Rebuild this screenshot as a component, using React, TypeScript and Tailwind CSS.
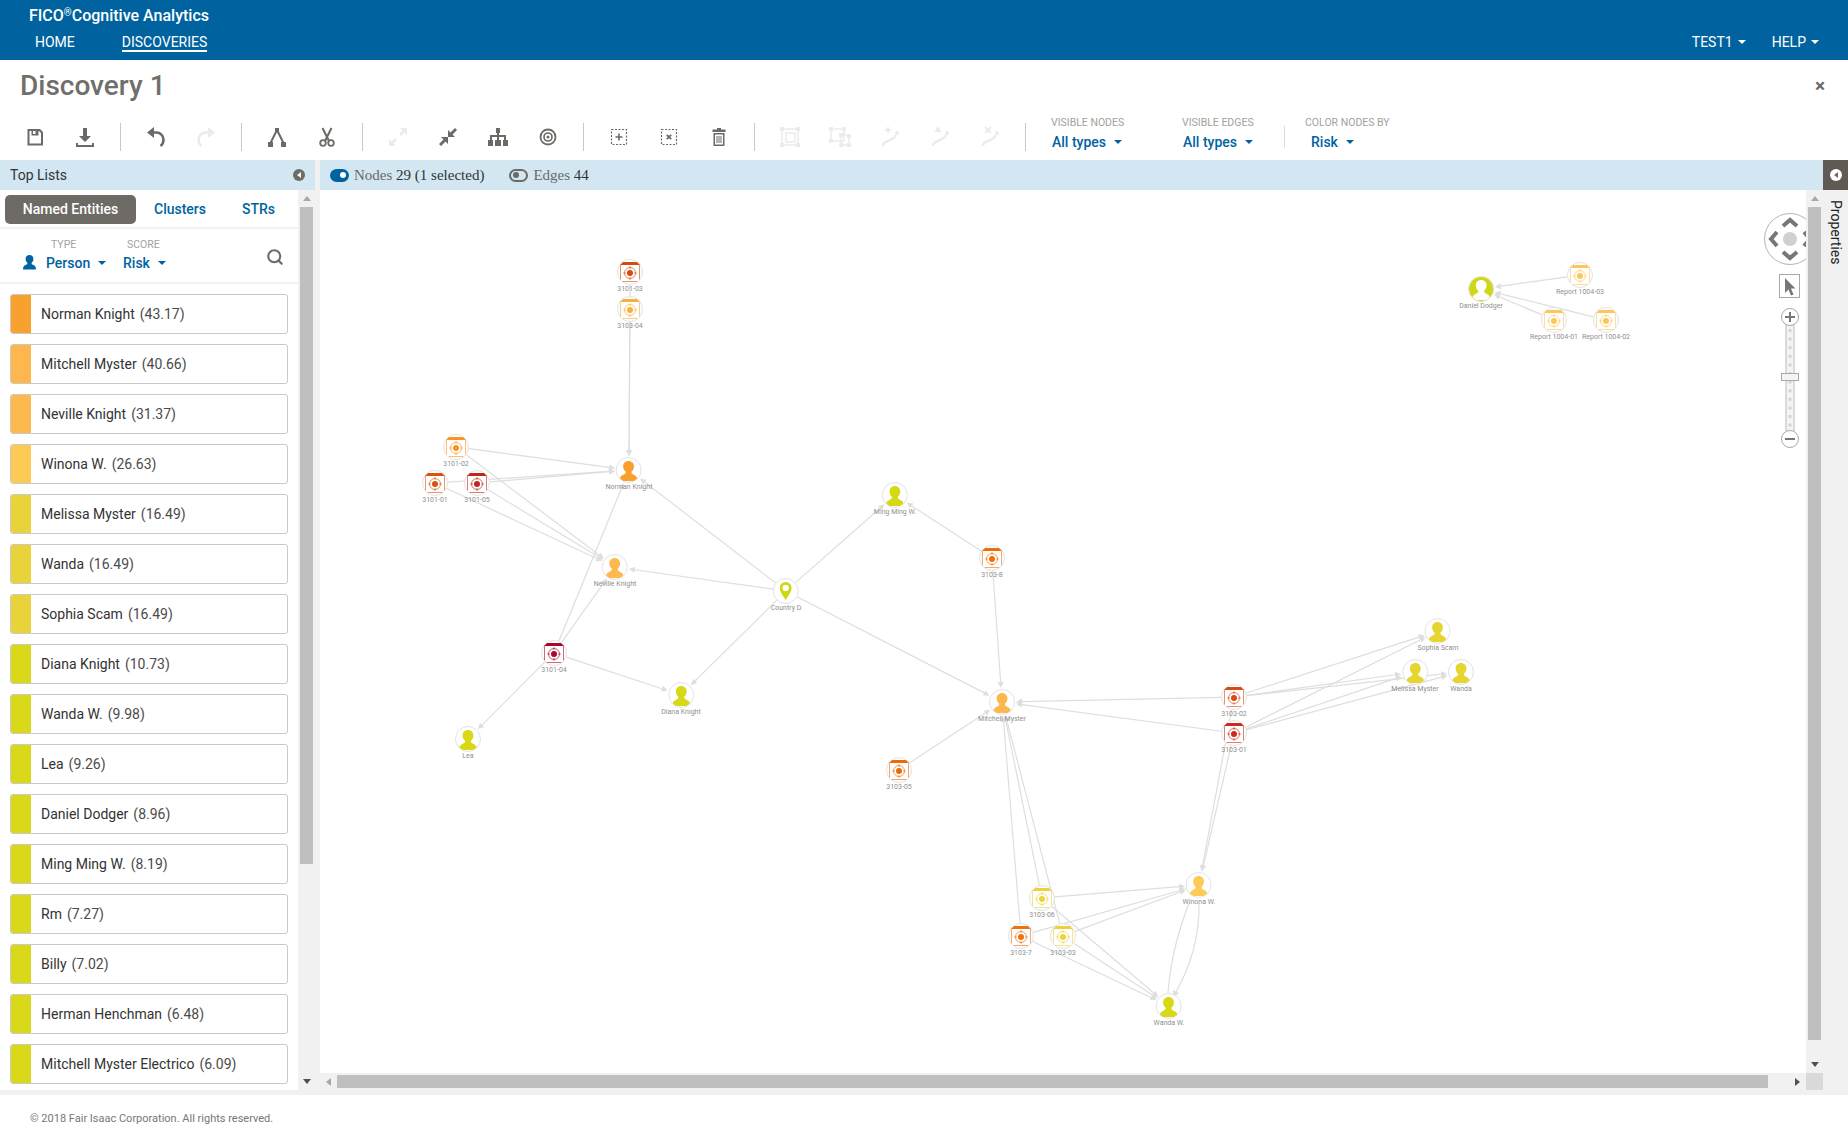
import { Search } from "lucide-react";
import type { ReactNode } from "react";

const OX = 320;
const OY = 190;

type Kind = "person" | "report" | "place";

const nodes: Record<string, { x: number; y: number; label: string; color: string; kind: Kind; filled?: boolean }> = {
  r103: { x: 630, y: 272, label: "3101-03", color: "#d14d0e", kind: "report" },
  r304: { x: 630, y: 309, label: "3103-04", color: "#fbae3c", kind: "report" },
  r102: { x: 456, y: 447, label: "3101-02", color: "#f7931e", kind: "report" },
  r101: { x: 435, y: 483, label: "3101-01", color: "#d9530f", kind: "report" },
  r105: { x: 477, y: 483, label: "3101-05", color: "#c0281c", kind: "report" },
  norman: { x: 629, y: 470, label: "Norman Knight", color: "#fb9f2c", kind: "person" },
  nevile: { x: 615, y: 567, label: "Neville Knight", color: "#fdb94e", kind: "person" },
  ming: { x: 895, y: 495, label: "Ming Ming W.", color: "#d6d916", kind: "person" },
  r38: { x: 992, y: 558, label: "3103-8", color: "#ee6f0a", kind: "report" },
  country: { x: 786, y: 591, label: "Country D", color: "#cdd70f", kind: "place" },
  r104: { x: 554, y: 653, label: "3101-04", color: "#a8092a", kind: "report" },
  diana: { x: 681, y: 695, label: "Diana Knight", color: "#d8d816", kind: "person" },
  lea: { x: 468, y: 739, label: "Lea", color: "#d8d816", kind: "person" },
  mitchell: { x: 1002, y: 702, label: "Mitchell Myster", color: "#fdb74f", kind: "person" },
  r305: { x: 899, y: 770, label: "3103-05", color: "#ea6b07", kind: "report" },
  r302: { x: 1234, y: 697, label: "3103-02", color: "#d94a1a", kind: "report" },
  r301: { x: 1234, y: 733, label: "3103-01", color: "#cc2a1e", kind: "report" },
  sophia: { x: 1438, y: 631, label: "Sophia Scam", color: "#e6d530", kind: "person" },
  melissa: { x: 1415, y: 672, label: "Melissa Myster", color: "#e6d530", kind: "person" },
  wanda: { x: 1461, y: 672, label: "Wanda", color: "#e6d530", kind: "person" },
  winona: { x: 1199, y: 885, label: "Winona W.", color: "#fdcb55", kind: "person" },
  wandaw: { x: 1169, y: 1006, label: "Wanda W.", color: "#d8d816", kind: "person" },
  r306: { x: 1042, y: 898, label: "3103-06", color: "#ecd33a", kind: "report" },
  r37: { x: 1021, y: 936, label: "3103-7", color: "#ed7210", kind: "report" },
  r303: { x: 1063, y: 936, label: "3103-03", color: "#ecd33a", kind: "report" },
  daniel: { x: 1481, y: 289, label: "Daniel Dodger", color: "#cfd818", kind: "person", filled: true },
  rep3: { x: 1580, y: 275, label: "Report 1004-03", color: "#fdc65a", kind: "report" },
  rep1: { x: 1554, y: 320, label: "Report 1004-01", color: "#fdc65a", kind: "report" },
  rep2: { x: 1606, y: 320, label: "Report 1004-02", color: "#fdc65a", kind: "report" },
};

const edges: [string, string][] = [
  ["rep3", "daniel"], ["rep1", "daniel"], ["rep2", "daniel"],
  ["r103", "norman"], ["r304", "norman"],
  ["r102", "norman"], ["r101", "norman"], ["r105", "norman"],
  ["r102", "nevile"], ["r101", "nevile"], ["r105", "nevile"],
  ["r104", "norman"], ["r104", "nevile"], ["r104", "diana"], ["r104", "lea"],
  ["country", "norman"], ["country", "nevile"], ["country", "ming"], ["country", "diana"], ["country", "mitchell"],
  ["r38", "ming"], ["r38", "mitchell"], ["r305", "mitchell"],
  ["r302", "mitchell"], ["r301", "mitchell"],
  ["r302", "sophia"], ["r302", "melissa"], ["r302", "wanda"],
  ["r301", "sophia"], ["r301", "melissa"], ["r301", "wanda"],
  ["r301", "winona"], ["r302", "winona"],
  ["r306", "mitchell"], ["r37", "mitchell"], ["r303", "mitchell"],
  ["r306", "winona"], ["r37", "winona"], ["r303", "winona"],
  ["r306", "wandaw"], ["r37", "wandaw"], ["r303", "wandaw"],
];

const topList = [
  ["Norman Knight", "43.17", "#f9a12e"],
  ["Mitchell Myster", "40.66", "#fdb74e"],
  ["Neville Knight", "31.37", "#fdb94f"],
  ["Winona W.", "26.63", "#fdcb55"],
  ["Melissa Myster", "16.49", "#e9d33a"],
  ["Wanda", "16.49", "#e9d33a"],
  ["Sophia Scam", "16.49", "#e9d33a"],
  ["Diana Knight", "10.73", "#d9d91a"],
  ["Wanda W.", "9.98", "#d9d91a"],
  ["Lea", "9.26", "#d9d91a"],
  ["Daniel Dodger", "8.96", "#d9d91a"],
  ["Ming Ming W.", "8.19", "#d9d91a"],
  ["Rm", "7.27", "#d9d91a"],
  ["Billy", "7.02", "#d9d91a"],
  ["Herman Henchman", "6.48", "#d9d91a"],
  ["Mitchell Myster Electrico", "6.09", "#d9d91a"],
];

function Caret() {
  return <span className="inline-block w-0 h-0 border-x-[4px] border-t-[4px] border-x-transparent border-t-current" />;
}

function Tool({ children }: { children: ReactNode }) {
  return <div className="w-[50px] flex items-center justify-center shrink-0">{children}</div>;
}

function Sep() {
  return <div className="w-px h-[28px] mx-[10px] bg-[#c8c8c8] shrink-0" />;
}

function Ico({ off, children }: { off?: boolean; children: ReactNode }) {
  return (
    <svg viewBox="0 0 24 24" className={off ? "w-[24px] h-[24px] text-[#ebebeb]" : "w-[24px] h-[24px] text-[#6b6a66]"}>
      {children}
    </svg>
  );
}

function Dropdown({ label, value, className }: { label: string; value: string; className: string }) {
  return (
    <div className={"flex flex-col self-start mt-[3px] shrink-0 " + className}>
      <span className="text-[10.5px] leading-[14px] text-[#a3a19d] whitespace-nowrap">{label}</span>
      <span className="text-[14px] leading-[20px] mt-[2px] font-medium text-[#00639f] flex items-center gap-[8px] pl-px">
        {value} <Caret />
      </span>
    </div>
  );
}

function Toolbar() {
  return (
    <div className="h-[50px] flex items-center pl-[10px] pt-[3px]">
      <Tool>
        <Ico>
          <path fill="currentColor" fillRule="evenodd" d="M4.500 4h12.500l3 3v13.500H4.500zM6.500 6v12.500h11.500V8l-2-2h-.5v4.500h-7V6zm3.500 0v3h2.500V6z" />
        </Ico>
      </Tool>
      <Tool>
        <Ico>
          <path fill="currentColor" d="M10 3h4v8h4l-6 6-6-6h4zM3 18h2v2h14v-2h2v4H3z" />
        </Ico>
      </Tool>
      <Sep />
      <Tool>
        <Ico>
          <path fill="none" stroke="currentColor" strokeWidth="2.600" d="M7 7.500h5.500a7 7 0 0 1 7 7c0 3-1 5-3 6.500" />
          <path fill="currentColor" d="M10 2v11L3 7.500z" />
        </Ico>
      </Tool>
      <Tool>
        <Ico off>
          <path fill="none" stroke="currentColor" strokeWidth="2.600" d="M17 7.500h-5.500a7 7 0 0 0-7 7c0 3 1 5 3 6.500" />
          <path fill="currentColor" d="M14 2v11l7-5.500z" />
        </Ico>
      </Tool>
      <Sep />
      <Tool>
        <Ico>
          <path fill="none" stroke="currentColor" strokeWidth="2" d="M12 5 5 19M12 5l7 14" />
          <path fill="currentColor" d="M10 3h4v4h-4zM3 17h5v5H3zM16 17h5v5h-5z" />
        </Ico>
      </Tool>
      <Tool>
        <Ico>
          <path fill="none" stroke="currentColor" strokeWidth="2" d="M7.500 3l6.500 13M16.500 3l-6.500 13" />
          <circle cx="8" cy="18" r="2.800" fill="none" stroke="currentColor" strokeWidth="1.800" />
          <circle cx="16" cy="18" r="2.800" fill="none" stroke="currentColor" strokeWidth="1.800" />
        </Ico>
      </Tool>
      <Sep />
      <Tool>
        <Ico off>
          <path fill="currentColor" d="M14 3h7v7l-2.500-2.500-3.500 3.500-2-2 3.500-3.500zM10 21H3v-7l2.500 2.500 3.500-3.500 2 2-3.500 3.500z" />
        </Ico>
      </Tool>
      <Tool>
        <Ico>
          <path fill="currentColor" d="M12 12h7l-2.500-2.500L21 5l-2-2-4.500 4.500L12 5zM12 12H5l2.500 2.500L3 19l2 2 4.500-4.500L12 19z" />
        </Ico>
      </Tool>
      <Tool>
        <Ico>
          <path fill="currentColor" d="M10 3h4v5h-1v2h7v5h2v6h-5v-6h1v-3h-5v3h2v6H9v-6h2v-3H6v3h1v6H2v-6h2v-5h7V8h-1z" />
        </Ico>
      </Tool>
      <Tool>
        <Ico>
          <circle cx="12" cy="12" r="7.500" fill="none" stroke="currentColor" strokeWidth="1.800" />
          <circle cx="12" cy="12" r="4" fill="none" stroke="currentColor" strokeWidth="1.700" />
          <circle cx="12" cy="12" r="1.500" fill="currentColor" />
        </Ico>
      </Tool>
      <Sep />
      <Tool>
        <Ico>
          <rect x="4.500" y="4.500" width="15" height="15" fill="none" stroke="currentColor" strokeWidth="1.200" strokeDasharray="2 1.500" />
          <path fill="currentColor" d="M11.200 8.500h1.600v2.700h2.700v1.600h-2.700v2.700h-1.600v-2.700H8.500v-1.600h2.700z" />
        </Ico>
      </Tool>
      <Tool>
        <Ico>
          <rect x="4.500" y="4.500" width="15" height="15" fill="none" stroke="currentColor" strokeWidth="1.200" strokeDasharray="2 1.500" />
          <path fill="none" stroke="currentColor" strokeWidth="1.800" d="m9.800 9.800 4.400 4.400m0-4.400-4.400 4.400" />
        </Ico>
      </Tool>
      <Tool>
        <Ico>
          <path fill="currentColor" fillRule="evenodd" d="M10 3h4v1.500h4.500V7h-13V4.500H10zM6.500 8h11v13h-11zm1.500 1.500v10h8v-10z" />
          <path fill="currentColor" d="M9.500 11h1v7h-1zM11.500 11h1v7h-1zM13.500 11h1v7h-1z" />
        </Ico>
      </Tool>
      <Sep />
      <Tool>
        <Ico off>
          <path fill="none" stroke="currentColor" strokeWidth="1.500" d="M4 4h16v16H4zM8 8h9v9H8z" />
          <path fill="currentColor" d="M2 2h4v4H2zM18 2h4v4h-4zM2 18h4v4H2zM18 18h4v4h-4z" />
        </Ico>
      </Tool>
      <Tool>
        <Ico off>
          <path fill="none" stroke="currentColor" strokeWidth="1.500" d="M3 4h13v12H3zM13 10h8v10h-8z" />
          <path fill="currentColor" d="M1 2h4v4H1zM14 2h4v4h-4zM1 14h4v4H1zM11 8h4v4h-4zM19 9h4v4h-4zM11 18h4v4h-4zM19 18h4v4h-4z" />
        </Ico>
      </Tool>
      <Tool>
        <Ico off>
          <path fill="none" stroke="currentColor" strokeWidth="2.400" d="M5 21c0-7 9-3 13-11" />
          <circle cx="19" cy="8" r="2" fill="currentColor" />
          <path fill="none" stroke="currentColor" strokeWidth="1.800" d="M10 2v6M7 5h6" />
        </Ico>
      </Tool>
      <Tool>
        <Ico off>
          <path fill="none" stroke="currentColor" strokeWidth="2.400" d="M5 21c0-7 9-3 13-11" />
          <circle cx="19" cy="8" r="2" fill="currentColor" />
          <path fill="currentColor" d="m10 1 3.500 6h-7z" />
        </Ico>
      </Tool>
      <Tool>
        <Ico off>
          <path fill="none" stroke="currentColor" strokeWidth="2.400" d="M5 21c0-7 9-3 13-11" />
          <circle cx="19" cy="8" r="2" fill="currentColor" />
          <path fill="none" stroke="currentColor" strokeWidth="1.800" d="m7 2 6 6m0-6-6 6" />
        </Ico>
      </Tool>
      <Sep />
      <Dropdown label="VISIBLE NODES" value="All types" className="ml-[15px] w-[131px]" />
      <Dropdown label="VISIBLE EDGES" value="All types" className="w-[102px]" />
      <div className="w-px h-[22px] bg-[#dcdcdc] shrink-0" />
      <div className="flex flex-col self-start mt-[3px] ml-[20px]">
        <span className="text-[10.5px] leading-[14px] text-[#a3a19d] whitespace-nowrap">COLOR NODES BY</span>
        <span className="text-[14px] leading-[20px] mt-[2px] font-medium text-[#00639f] flex items-center gap-[8px] pl-[6px]">
          Risk <Caret />
        </span>
      </div>
    </div>
  );
}

function ScrollArrow({ dir }: { dir: "up" | "down" | "left" | "right" }) {
  if (dir === "up") return <span className="w-0 h-0 border-x-[4px] border-b-[5px] border-x-transparent border-b-[#a8a8a8]" />;
  if (dir === "down") return <span className="w-0 h-0 border-x-[4px] border-t-[5px] border-x-transparent border-t-[#505050]" />;
  if (dir === "left") return <span className="w-0 h-0 border-y-[4px] border-r-[5px] border-y-transparent border-r-[#a8a8a8]" />;
  return <span className="w-0 h-0 border-y-[4px] border-l-[5px] border-y-transparent border-l-[#505050]" />;
}

function VScroll({ thumb, className }: { thumb: string; className: string }) {
  return (
    <div className={"flex flex-col items-center bg-[#f1f1f1] " + className}>
      <div className="h-[17px] flex items-center justify-center shrink-0">
        <ScrollArrow dir="up" />
      </div>
      <div className={"w-[13px] bg-[#bfbfbf] shrink-0 " + thumb} />
      <div className="flex-1" />
      <div className="h-[17px] flex items-center justify-center shrink-0">
        <ScrollArrow dir="down" />
      </div>
    </div>
  );
}

function PersonIcon({ color, size = 18 }: { color: string; size?: number }) {
  return (
    <svg viewBox="0 0 18 20" width={size} height={(size * 20) / 18}>
      <path fill={color} d="M9 0c3.200 0 5.400 2.300 5.400 5.500 0 2.200-1 4-2.400 5.100v1.500c0 .8 1.300 1.300 3 2.100C17 15.200 18 16.600 18 20H0c0-3.400 1-4.800 3-5.800 1.700-.8 3-1.300 3-2.100v-1.500C4.600 9.500 3.600 7.700 3.600 5.500 3.600 2.300 5.800 0 9 0z" />
    </svg>
  );
}

function ReportIcon({ color }: { color: string }) {
  return (
    <svg viewBox="0 0 20 20" width="20" height="20">
      <rect x=".5" y=".5" width="19" height="19" rx="1" fill="#fff" stroke={color} strokeOpacity=".6" />
      <rect x="0" y="0" width="20" height="3" fill={color} />
      <circle cx="10" cy="11" r="5.500" fill="none" stroke={color} strokeOpacity=".75" strokeWidth=".9" />
      <path stroke={color} strokeOpacity=".75" strokeWidth=".8" d="M10 4v3M10 15v3M3 11h3M14 11h3" />
      <circle cx="10" cy="11" r="3" fill={color} />
    </svg>
  );
}

function PinIcon({ color }: { color: string }) {
  return (
    <svg viewBox="0 0 12 18" width="12" height="18">
      <path fill={color} fillRule="evenodd" d="M6 0a6 6 0 0 1 6 6c0 3.500-3.500 8-6 12C3.500 14 0 9.500 0 6a6 6 0 0 1 6-6zm0 2.800a3.200 3.200 0 1 0 0 6.400 3.200 3.200 0 0 0 0-6.400z" />
    </svg>
  );
}

function GraphNode({ id }: { id: string }) {
  const n = nodes[id];
  return (
    <div className="absolute flex flex-col items-center -translate-x-1/2" style={{ left: n.x - OX, top: n.y - OY - 13 }}>
      <div
        className="w-[26px] h-[26px] rounded-full border border-[#e3e3e3] bg-white flex items-center justify-center overflow-hidden"
        style={n.filled ? { backgroundColor: n.color } : undefined}
      >
        {n.kind === "report" && <ReportIcon color={n.color} />}
        {n.kind === "place" && <PinIcon color={n.color} />}
        {n.kind === "person" && (
          <div className="mt-[2px]">
            <PersonIcon color={n.filled ? "#fff" : n.color} size={18} />
          </div>
        )}
      </div>
      <span className="text-[7px] leading-[9px] text-[#8f8f8f] whitespace-nowrap">{n.label}</span>
    </div>
  );
}

function Edge({ from, to }: { from: string; to: string }) {
  const a = nodes[from];
  const b = nodes[to];
  const dx = b.x - a.x;
  const dy = b.y - a.y;
  const len = Math.hypot(dx, dy);
  const ux = dx / len;
  const uy = dy / len;
  const x1 = a.x - OX + ux * 13;
  const y1 = a.y - OY + uy * 13;
  const x2 = b.x - OX - ux * 14;
  const y2 = b.y - OY - uy * 14;
  const bx = x2 - ux * 6;
  const by = y2 - uy * 6;
  return (
    <g>
      <line x1={x1} y1={y1} x2={bx} y2={by} stroke="#dedede" strokeWidth="1.200" />
      <polygon points={`${x2},${y2} ${bx - uy * 3},${by + ux * 3} ${bx + uy * 3},${by - ux * 3}`} fill="#dedede" />
    </g>
  );
}

function Navigator() {
  return (
    <svg viewBox="0 0 60 290" width="60" height="290" className="absolute right-0 top-[14px]">
      <circle cx="44" cy="35" r="25.500" fill="#fff" stroke="#b5b5b5" />
      <circle cx="44" cy="35" r="7" fill="#d0d0d0" />
      <path fill="none" stroke="#77767a" strokeWidth="4" d="M37 22l7-6 7 6M37 48l7 6 7-6M31 28l-6 7 6 7M58 28l6 7-6 7" />
      <rect x="33.500" y="70.500" width="20" height="23" fill="#fff" stroke="#a8a8a8" />
      <path fill="#77767a" d="M39 74v15l3.500-3.500 2.500 6 2.500-1-2.500-6h4.500z" />
      <rect x="40" y="120" width="8" height="108" fill="#f4f4f4" stroke="#bcbcbc" />
      <path stroke="#d4d4d4" strokeWidth="3" strokeDasharray="3 5.600" d="M44 125v100" />
      <circle cx="44" cy="113" r="8.500" fill="#fff" stroke="#a8a8a8" />
      <path fill="none" stroke="#77767a" strokeWidth="2" d="M39 113h10M44 108v10" />
      <rect x="35.500" y="169.500" width="17" height="7" fill="#f4f4f4" stroke="#a8a8a8" />
      <circle cx="44" cy="235" r="8.500" fill="#fff" stroke="#a8a8a8" />
      <path fill="none" stroke="#77767a" strokeWidth="2" d="M39 235h10" />
    </svg>
  );
}

export default function App() {
  return (
    <div className="w-[1848px] h-[1130px] overflow-hidden bg-white flex flex-col font-['Roboto',sans-serif] text-[#333]">
      {/* Header */}
      <header className="h-[60px] bg-[#00639f] text-white flex items-end justify-between shrink-0 relative">
        <div className="absolute left-[29px] top-[6px] text-[16px] leading-[20px] font-medium">
          FICO<sup className="text-[10px]">®</sup>Cognitive Analytics
        </div>
        <nav className="flex pl-[35px] gap-[47px] text-[14px] leading-[16px] pb-[8px]">
          <span>HOME</span>
          <span className="border-b-2 border-white">DISCOVERIES</span>
        </nav>
        <div className="flex items-center gap-[26px] pr-[29px] text-[14px] leading-[16px] pb-[10px]">
          <span className="flex items-center gap-[5px]">TEST1 <Caret /></span>
          <span className="flex items-center gap-[5px]">HELP <Caret /></span>
        </div>
      </header>

      {/* Title */}
      <div className="h-[50px] flex items-center justify-between pl-[20px] pr-[23px] shrink-0">
        <h1 className="text-[28px] font-medium text-[#716f6b] mt-[2px]">Discovery 1</h1>
        <span className="text-[19px] font-bold text-[#6b6a66] leading-none">×</span>
      </div>

      <Toolbar />

      {/* Main */}
      <div className="h-[935px] flex bg-[#f1f1f1] pb-[5px] shrink-0">
        {/* Left panel */}
        <aside className="w-[315px] flex flex-col shrink-0">
          <div className="h-[30px] bg-[#d2e7f2] flex items-center justify-between pl-[10px] pr-[10px] shrink-0">
            <span className="text-[14px] text-[#333]">Top Lists</span>
            <span className="w-[12px] h-[12px] rounded-full bg-[#6e6b66] flex items-center justify-center">
              <span className="w-0 h-0 border-y-[3px] border-r-[4px] border-y-transparent border-r-white" />
            </span>
          </div>
          <div className="flex-1 flex min-h-0">
            <div className="w-[298px] bg-white flex flex-col shrink-0">
              <div className="h-[39px] border-b-2 border-[#f1f1f1] flex items-start pt-[5px] pl-[5px] shrink-0">
                <span className="w-[131px] h-[29px] bg-[#6e6b66] rounded-[5px] text-white text-[14px] font-medium flex items-center justify-center">
                  Named Entities
                </span>
                <span className="ml-[18px] h-[29px] flex items-center text-[14px] font-medium text-[#00639f]">Clusters</span>
                <span className="ml-[36px] h-[29px] flex items-center text-[14px] font-medium text-[#00639f]">STRs</span>
              </div>
              <div className="h-[55px] border-b-2 border-[#f1f1f1] flex items-center pl-[23px] pr-[14px] shrink-0">
                <div className="mt-[14px]">
                  <PersonIcon color="#00639f" size={13} />
                </div>
                <div className="flex flex-col ml-[10px] w-[77px]">
                  <span className="text-[10.5px] leading-[14px] text-[#a3a19d] pl-[5px]">TYPE</span>
                  <span className="text-[14px] leading-[20px] mt-[1px] font-medium text-[#00639f] flex items-center gap-[8px]">
                    Person <Caret />
                  </span>
                </div>
                <div className="flex flex-col flex-1">
                  <span className="text-[10.5px] leading-[14px] text-[#a3a19d] pl-[4px]">SCORE</span>
                  <span className="text-[14px] leading-[20px] mt-[1px] font-medium text-[#00639f] flex items-center gap-[8px]">
                    Risk <Caret />
                  </span>
                </div>
                <Search size={18} strokeWidth={2.8} className="text-[#6b6a66] mt-[2px]" />
              </div>
              <div className="flex flex-col gap-[10px] pt-[10px] pl-[10px] pr-[10px]">
                {topList.map(([name, score, color]) => (
                  <div key={name} className="h-[40px] border border-[#c9c9c9] rounded-[3px] flex items-center overflow-hidden shrink-0">
                    <span className="w-[20px] h-full shrink-0" style={{ backgroundColor: color }} />
                    <span className="ml-[10px] pt-px text-[14px] text-[#333] whitespace-nowrap">
                      {name}
                      <span className="ml-[5px] text-[#4b4b4b]">({score})</span>
                    </span>
                  </div>
                ))}
              </div>
            </div>
            <VScroll thumb="h-[657px]" className="w-[17px] shrink-0" />
          </div>
        </aside>

        {/* Middle */}
        <main className="ml-[5px] w-[1503px] flex flex-col shrink-0">
          <div className="h-[30px] bg-[#d2e7f2] flex items-center pl-[10px] font-['Liberation_Serif',serif] text-[15px] shrink-0">
            <span className="w-[19px] h-[13px] rounded-full bg-[#00639f] flex items-center justify-end pr-[3px]">
              <span className="w-[6px] h-[6px] rounded-full bg-white" />
            </span>
            <span className="ml-[5px] text-[#6b6a66]">
              Nodes <span className="text-[#333]">29 (1 selected)</span>
            </span>
            <span className="ml-[25px] w-[19px] h-[13px] rounded-full border-2 border-[#6b6a66] flex items-center pl-[2px]">
              <span className="w-[6px] h-[6px] rounded-full bg-[#6b6a66]" />
            </span>
            <span className="ml-[5px] text-[#6b6a66]">
              Edges <span className="text-[#333]">44</span>
            </span>
          </div>
          <div className="flex-1 flex min-h-0">
            <div className="w-[1486px] flex flex-col shrink-0">
              {/* Graph canvas */}
              <div className="h-[883px] bg-white relative overflow-hidden shrink-0">
                <svg className="absolute inset-0 w-full h-full">
                  {edges.map(([f, t]) => (
                    <Edge key={f + t} from={f} to={t} />
                  ))}
                  <path d="M869 713Q851 760 848 803" fill="none" stroke="#dedede" strokeWidth="1.200" />
                  <path d="M879 713Q880 760 855 804" fill="none" stroke="#dedede" strokeWidth="1.200" />
                  <polygon points="853,808 853,800 859,803" fill="#dedede" />
                </svg>
                {Object.keys(nodes).map((id) => (
                  <GraphNode key={id} id={id} />
                ))}
                <Navigator />
              </div>
              <div className="h-[17px] flex items-center shrink-0">
                <div className="w-[17px] flex justify-center shrink-0">
                  <ScrollArrow dir="left" />
                </div>
                <div className="w-[1431px] h-[13px] bg-[#bfbfbf] shrink-0" />
                <div className="flex-1 flex justify-end pr-[6px]">
                  <ScrollArrow dir="right" />
                </div>
              </div>
            </div>
            <div className="w-[17px] flex flex-col shrink-0">
              <VScroll thumb="h-[833px]" className="flex-1" />
              <div className="h-[17px] bg-[#d9d9d9] shrink-0" />
            </div>
          </div>
        </main>

        {/* Properties */}
        <div className="w-[25px] flex flex-col items-center shrink-0">
          <div className="w-full h-[30px] bg-[#5f5a54] flex items-center justify-center shrink-0">
            <span className="w-[12px] h-[12px] rounded-full bg-white flex items-center justify-center">
              <span className="w-0 h-0 border-y-[3px] border-r-[4px] border-y-transparent border-r-[#6e6b66]" />
            </span>
          </div>
          <span className="mt-[10px] text-[14px] leading-[20px] text-[#222] [writing-mode:vertical-rl]">Properties</span>
        </div>
      </div>

      {/* Footer */}
      <footer className="flex-1 flex items-center pl-[30px] pt-[14px] text-[11px] text-[#77767a]">
        © 2018 Fair Isaac Corporation. All rights reserved.
      </footer>
    </div>
  );
}
